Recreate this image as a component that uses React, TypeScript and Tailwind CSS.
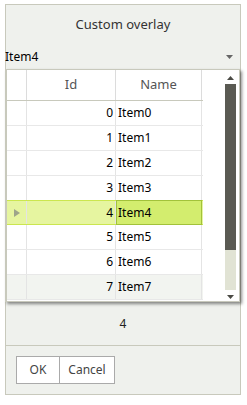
import React from "react";

const rows = [0, 1, 2, 3, 4, 5, 6, 7];
const selected = 4;

function Popup() {
  return (
    <div className="absolute left-[5px] top-[69px] w-[235px] h-[233px] bg-white border border-[#c8c9bc] border-l-2 shadow-[2px_2px_3px_rgba(0,0,0,0.45)] flex">
      <div className="flex flex-col w-[196px]">
        <div className="flex h-[31px] border-b border-[#c8c9bc] text-[13px] text-[#555]">
          <div className="w-[20px] border-r border-[#dcdcdc]" />
          <div className="w-[89px] border-r border-[#dcdcdc] flex items-center justify-center">Id</div>
          <div className="w-[86px] border-r border-[#dcdcdc] flex items-center justify-center">Name</div>
        </div>
        {rows.map((r) => {
          const sel = r === selected;
          return (
            <div
              key={r}
              className={
                sel
                  ? "flex h-[25px] bg-[#e6f5a0] border-y border-[#cbe64f] -mt-px"
                  : r === 7
                  ? "flex h-[25px] bg-[#f2f4f0] border-b border-[#e8e8e8]"
                  : "flex h-[25px] border-b border-[#e8e8e8]"
              }
            >
              <div className="w-[20px] border-r border-[#e4e4e4] flex items-center pl-[7px]">
                {sel && (
                  <svg width="6" height="8" viewBox="0 0 6 8">
                    <path d="M0 0L6 4L0 8Z" fill="#9ea58a" />
                  </svg>
                )}
              </div>
              <div className="w-[89px] border-r border-[#e4e4e4] flex items-center justify-end pr-[2px] text-[12px] text-black">
                {r}
              </div>
              <div
                className={
                  sel
                    ? "w-[86px] -my-px bg-[#d3ed6e] border border-[#a2c23a] flex items-center pl-px text-[12px] text-black"
                    : "w-[86px] border-r border-[#e4e4e4] flex items-center pl-[2px] text-[12px] text-black"
                }
              >
                Item{r}
              </div>
            </div>
          );
        })}
      </div>
      <div className="flex-1" />
      <div className="w-[12px] mr-[3px] flex flex-col items-center">
        <svg className="mt-[6px]" width="7" height="4" viewBox="0 0 7 4">
          <path d="M0 4L3.5 0L7 4Z" fill="#4a4a44" />
        </svg>
        <div className="mt-[4px] w-[11px] h-[166px] bg-[#5a5a53]" />
        <div className="w-[11px] h-[40px] bg-[#e1e3d4]" />
        <svg className="mt-[5px]" width="7" height="4" viewBox="0 0 7 4">
          <path d="M0 0L3.5 4L7 0Z" fill="#4a4a44" />
        </svg>
      </div>
    </div>
  );
}

export default function App() {
  return (
    <div className="relative w-[247px] h-[405px] bg-white pt-[4px]" style={{ fontFamily: '"Noto Sans", "Open Sans", sans-serif' }}>
      <div className="ml-[5px] w-[236px] border border-[#c8c9bc] bg-[#eff1ed] flex flex-col">
        <div className="h-[40px] flex items-center justify-center text-[13px] text-[#333]">Custom overlay</div>
        <div className="h-[24px] -ml-px flex items-center justify-between pr-[7px] text-[12px] text-black">
          <span>Item4</span>
          <svg width="7" height="4" viewBox="0 0 7 4">
            <path d="M0 0L3.5 4L7 0Z" fill="#666" />
          </svg>
        </div>
        <div className="h-[276px] flex items-end justify-center pb-[12px] text-[12px] text-[#222]">4</div>
        <div className="border-t border-[#c8c9bc] h-[49px] flex items-start pt-[10px] pl-[10px]">
          <button className="h-[28px] w-[44px] border border-[#aaa] bg-white text-[12px] text-[#444]">OK</button>
          <button className="h-[28px] w-[55px] border border-[#aaa] border-l-0 bg-white text-[12px] text-[#444]">Cancel</button>
        </div>
      </div>
      <Popup />
    </div>
  );
}
